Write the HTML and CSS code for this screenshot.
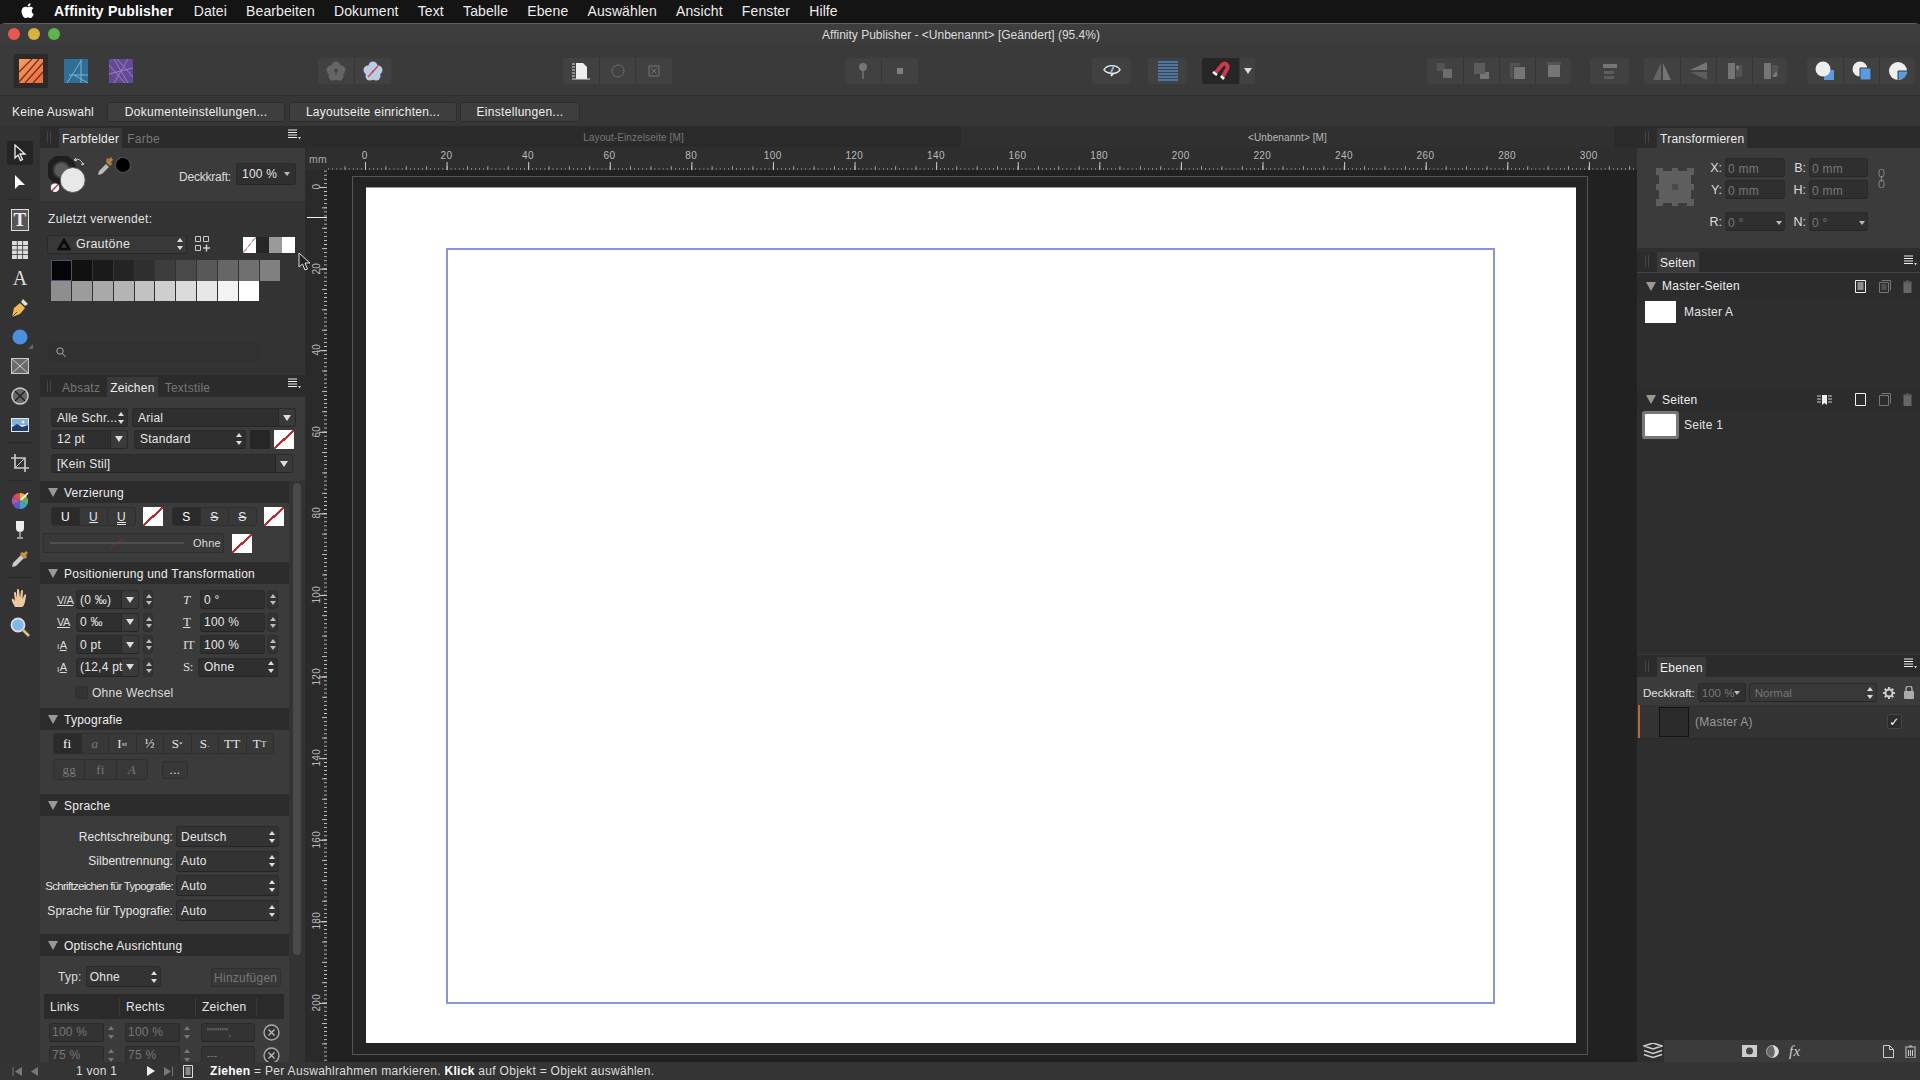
FILE: index.html
```html
<!DOCTYPE html>
<html lang="de">
<head>
<meta charset="utf-8">
<title>Affinity Publisher</title>
<link rel="stylesheet" href="styles.css">
</head>
<body>
<header class="menubar">
  <svg class="apple" width="15" height="17" viewBox="0 0 16 17"><path fill="#fff" d="M12.500 9c0-2 1.600-2.900 1.700-3-1-1.400-2.400-1.600-2.900-1.600-1.200-.1-2.400.7-3 .7s-1.600-.7-2.600-.7C4.400 4.400 3 5.200 2.300 6.500c-1.400 2.400-.4 6 1 8 .7 1 1.500 2 2.500 2 1 0 1.400-.6 2.600-.6s1.500.6 2.600.6 1.800-1 2.500-2c.8-1.100 1.100-2.200 1.100-2.300-.1 0-2.200-.8-2.100-3.200zM10.500 3.200c.5-.7.900-1.600.8-2.500-.8 0-1.700.5-2.300 1.200-.5.600-.9 1.500-.8 2.400.9.100 1.800-.4 2.300-1.100z"/></svg>
  <strong class="app">Affinity Publisher</strong>
  <span>Datei</span><span>Bearbeiten</span><span>Dokument</span><span>Text</span><span>Tabelle</span><span>Ebene</span><span>Auswählen</span><span>Ansicht</span><span>Fenster</span><span>Hilfe</span>
</header>

<div class="window">
  <div class="titlebar">
    <div class="lights"><i class="red"></i><i class="yellow"></i><i class="green"></i></div>
    <div class="title">Affinity Publisher - &lt;Unbenannt&gt; [Geändert] (95.4%)</div>
  </div>

  <div class="toolbar">
    <div class="persona active">
      <svg width="24" height="24" viewBox="0 0 24 24"><defs><linearGradient id="pub" x1="0" y1="0" x2="1" y2="1"><stop offset="0" stop-color="#f0a060"/><stop offset="1" stop-color="#ee6a3c"/></linearGradient></defs><rect width="24" height="24" fill="url(#pub)"/><path d="M0 13 13 0M0 23 20 0M6 24 24 4M14 24 24 13" stroke="#7a2b1c" stroke-width="1.300" fill="none"/></svg>
    </div>
    <div class="persona">
      <svg width="24" height="24" viewBox="0 0 24 24"><rect width="24" height="24" fill="#2f6f97"/><path d="M17 0v24M3 24 17 2M5 16h19M10 16l14 8" stroke="#7fb4d4" stroke-width="1" fill="none"/></svg>
    </div>
    <div class="persona">
      <svg width="24" height="24" viewBox="0 0 24 24"><rect width="24" height="24" fill="#644a94"/><path d="M5 0 19 24M0 15 24 9M19 0 5 24M8 0 24 18M0 6 16 24" stroke="#9a7fc4" stroke-width="1" fill="none"/></svg>
    </div>

    <div class="tb-group at-flower">
      <div class="tb-cell"><svg class="dim" width="20" height="20" viewBox="0 0 20 20"><g fill="#8a8a8a"><circle cx="10" cy="5" r="4.500"/><circle cx="15" cy="9" r="4.500"/><circle cx="13" cy="15" r="4.500"/><circle cx="7" cy="15" r="4.500"/><circle cx="5" cy="9" r="4.500"/></g><path d="M10 14V8M8 10l2-2 2 2" stroke="#444" stroke-width="1.200" fill="none"/></svg></div>
      <div class="tb-cell"><svg width="20" height="20" viewBox="0 0 20 20"><g fill="#bccbe6"><circle cx="10" cy="5" r="4.500"/><circle cx="15" cy="9" r="4.500"/><circle cx="13" cy="15" r="4.500"/><circle cx="7" cy="15" r="4.500"/><circle cx="5" cy="9" r="4.500"/></g><path d="M5 16 15 5" stroke="#d9453c" stroke-width="1.400"/></svg></div>
    </div>
    <div class="tb-group at-doc">
      <div class="tb-cell"><svg width="18" height="18" viewBox="0 0 18 18"><path d="M4 1h7l4 4v12H4z" fill="#eee"/><path d="M0 2h3M0 5h3M0 8h3M0 11h3M0 14h3M0 17h18" stroke="#ddd"/></svg></div>
      <div class="tb-cell"><svg class="dim" width="14" height="14" viewBox="0 0 14 14"><circle cx="7" cy="7" r="6" fill="none" stroke="#999"/></svg></div>
      <div class="tb-cell"><svg class="dim" width="12" height="12" viewBox="0 0 12 12"><path d="M1 1h10v10H1zM3.500 3.500l5 5M8.500 3.500l-5 5" stroke="#aaa" fill="none"/></svg></div>
    </div>
    <div class="tb-group at-pin">
      <div class="tb-cell"><svg class="dim" width="10" height="18" viewBox="0 0 10 18"><circle cx="5" cy="5" r="4" fill="#aaa"/><path d="M5 8v9" stroke="#aaa" stroke-width="1.400"/></svg></div>
      <div class="tb-cell"><svg class="dim" width="6" height="6" viewBox="0 0 6 6"><rect width="6" height="6" fill="#bbb"/></svg></div>
    </div>
    <div class="tb-group at-eye"><div class="tb-cell wide"><svg width="18" height="13" viewBox="0 0 20 14"><path d="M1 6C5 0 15 0 19 6c-2 3-4 4-7 4L9 13l1-3C6 10 3 9 1 6z" fill="none" stroke="#eee" stroke-width="1.500"/><path d="M12 2 9 9" stroke="#8fb5e6" stroke-width="2"/></svg></div></div>
    <div class="tb-group at-lines"><div class="tb-cell wide"><svg width="20" height="22" viewBox="0 0 20 22"><rect width="20" height="22" fill="#2f4660"/><path d="M0 2h20M0 5h20M0 8h20M0 11h20M0 14h20M0 17h20M0 20h20" stroke="#7fa3cc"/></svg></div></div>
    <div class="tb-group at-magnet">
      <div class="tb-cell magnet"><svg width="20" height="20" viewBox="0 0 20 20"><path d="M3.500 13 11 4c3-3 7 0 5 4l-5 9" fill="none" stroke="#c93a4a" stroke-width="4"/><path d="M2 11l4 3M10 15l3 3" stroke="#fff" stroke-width="2.500"/></svg></div>
      <div class="tb-cell caret-cell"><i class="caret"></i></div>
    </div>
    <div class="tb-group at-arrange">
      <div class="tb-cell"><svg class="dim" width="18" height="18" viewBox="0 0 18 18"><path d="M1 1h8v8H1z" fill="#666"/><path d="M7 7h9v9H7z" fill="#999"/></svg></div>
      <div class="tb-cell"><svg class="dim" width="18" height="18" viewBox="0 0 18 18"><path d="M1 1h11v11H1z" fill="#777"/><path d="M12 10h4v7H7v-5h5z" fill="#aaa"/></svg></div>
      <div class="tb-cell"><svg class="dim" width="18" height="18" viewBox="0 0 18 18"><path d="M1 1h10v3H4v12H1z" fill="#666"/><path d="M5 5h11v12H5z" fill="#aaa"/></svg></div>
      <div class="tb-cell"><svg class="dim" width="18" height="18" viewBox="0 0 18 18"><path d="M2 0h14v3H2z" fill="#666"/><path d="M3 3h12v12H3z" fill="#aaa"/></svg></div>
    </div>
    <div class="tb-group at-align"><div class="tb-cell wide"><svg class="dim" width="18" height="18" viewBox="0 0 18 18"><path d="M2 2h14v4H2z" fill="#aaa"/><path d="M3 9h10v3H3zM3 14h10v3H3z" fill="#777"/></svg></div></div>
    <div class="tb-group at-flip">
      <div class="tb-cell"><svg class="dim" width="20" height="20" viewBox="0 0 20 20"><path d="M9 2v17H1z" fill="#888"/><path d="M11 2v17h8z" fill="#aaa"/></svg></div>
      <div class="tb-cell"><svg class="dim" width="20" height="20" viewBox="0 0 20 20"><path d="M18 1v8H1z" fill="#aaa"/><path d="M18 19v-8H1z" fill="#777"/></svg></div>
      <div class="tb-cell"><svg class="dim" width="18" height="18" viewBox="0 0 18 18"><path d="M2 1h7v16H2z" fill="#aaa"/><path d="M10 3h6v12h-6z" fill="#666"/><path d="M12 8V4l-2 2" stroke="#ddd" fill="none"/></svg></div>
      <div class="tb-cell"><svg class="dim" width="18" height="18" viewBox="0 0 18 18"><path d="M2 1h7v16H2z" fill="#aaa"/><path d="M10 3h6v12h-6z" fill="#666"/><path d="M14 10v4h-3l2-2" stroke="#ddd" fill="none"/></svg></div>
    </div>
    <div class="tb-group at-bool">
      <div class="tb-cell"><svg width="20" height="20" viewBox="0 0 20 20"><path d="M9 9h10v10H9z" fill="#5a9be0"/><circle cx="8" cy="8" r="7.500" fill="#eee"/></svg></div>
      <div class="tb-cell"><svg width="20" height="20" viewBox="0 0 20 20"><circle cx="8" cy="8" r="7.500" fill="#eee"/><path d="M8 7h11v12H8z" fill="#5a9be0" stroke="#3a3a3a"/></svg></div>
      <div class="tb-cell"><svg width="20" height="20" viewBox="0 0 20 20"><circle cx="10" cy="10" r="9" fill="#eee"/><path d="M10 10h9a9 9 0 0 1-9 9z" fill="#5a9be0"/><path d="M10 10h9M10 10v9" stroke="#3a3a3a"/></svg></div>
    </div>
  </div>

  <div class="context">
    <span class="ctx-label">Keine Auswahl</span>
    <button class="ctx-btn b1">Dokumenteinstellungen...</button>
    <button class="ctx-btn b2">Layoutseite einrichten...</button>
    <button class="ctx-btn b3">Einstellungen...</button>
  </div>

  <div class="main">
    <nav class="tools">
      <div class="tool selected"><svg width="14" height="18" viewBox="0 0 14 18"><path d="M2 1v13l3-3 2.500 5.500 2-1L7 10h5z" fill="none" stroke="#eee" stroke-width="1.300"/></svg></div>
      <div class="tool"><svg width="12" height="16" viewBox="0 0 12 16"><path d="M1 1v14l4-4h6z" fill="#fff"/></svg></div>
      <div class="tool-sep"></div>
      <div class="tool"><svg width="18" height="22" viewBox="0 0 18 22"><rect x=".5" y=".5" width="17" height="21" fill="#555" stroke="#ddd"/><text x="9" y="17" class="ico-serif">T</text></svg></div>
      <div class="tool"><svg width="16" height="18" viewBox="0 0 16 18"><rect width="16" height="18" fill="#ddd"/><path d="M0 4.500h16M0 9h16M0 13.500h16M5.300 0v18M10.600 0v18" stroke="#333" stroke-width=".8"/></svg></div>
      <div class="tool"><span class="tool-a">A</span></div>
      <div class="tool"><svg width="18" height="20" viewBox="0 0 18 20"><path d="M1 19 3 10l6-5 5 5-5 6z" fill="#f0b955"/><path d="M1 19l5-5" stroke="#6a4a10"/><path d="M10 4l2-3 5 5-3 2z" fill="#e8e0d0"/></svg></div>
      <div class="tool"><svg width="16" height="16" viewBox="0 0 16 16"><circle cx="8" cy="8" r="7.500" fill="#4a8fe0"/></svg><i class="tcorner"></i></div>
      <div class="tool"><svg width="18" height="16" viewBox="0 0 18 16"><rect x=".5" y=".5" width="17" height="15" fill="#6a6a6a" stroke="#ccc"/><path d="M0 0l18 16M18 0 0 16" stroke="#ccc"/></svg></div>
      <div class="tool"><svg width="18" height="18" viewBox="0 0 18 18"><circle cx="9" cy="9" r="8" fill="#666" stroke="#ccc" stroke-width="1.500"/><path d="M4 4l10 10M14 4 4 14" stroke="#222" stroke-width="1.500"/></svg></div>
      <div class="tool"><svg width="18" height="14" viewBox="0 0 18 14"><rect width="18" height="14" fill="#dfe9f4"/><rect x="1" y="1" width="16" height="6" fill="#7fb0e0"/><circle cx="12" cy="4" r="1.500" fill="#ffe9a0"/><path d="M1 9l5-3 5 3 6-2v6H1z" fill="#1e3e70"/></svg></div>
      <div class="tool-sep"></div>
      <div class="tool"><svg width="18" height="18" viewBox="0 0 18 18"><path d="M4 0v14h14M0 4h14v14" fill="none" stroke="#ccc" stroke-width="1.600"/><path d="M4 14 14 4" stroke="#ccc"/></svg></div>
      <div class="tool-sep"></div>
      <div class="tool"><svg width="18" height="18" viewBox="0 0 18 18"><path d="M9 9 9 1A8 8 0 0 1 16 5z" fill="#e8b040"/><path d="M9 9 16 5a8 8 0 0 1 0 8z" fill="#60b060"/><path d="M9 9l7 4a8 8 0 0 1-7 4z" fill="#40a0d0"/><path d="M9 9v8a8 8 0 0 1-7-4z" fill="#5060c0"/><path d="M9 9 2 13a8 8 0 0 1 0-8z" fill="#b050b0"/><path d="M9 9 2 5a8 8 0 0 1 7-4z" fill="#d05050"/><path d="M10 8l7-7" stroke="#fff" stroke-width="1.600"/></svg></div>
      <div class="tool"><svg width="10" height="18" viewBox="0 0 10 18"><path d="M1 0h8v7a4 4 0 0 1-8 0z" fill="#eee"/><path d="M5 10v6M2 17h6" stroke="#bbb" stroke-width="1.400"/></svg></div>
      <div class="tool"><svg width="18" height="18" viewBox="0 0 18 18"><path d="M1 17l1-4 8-8 3 3-8 8z" fill="#ccc"/><path d="M9 4l5 5 2-2-1-2 2-2-2-2-2 2-2-1z" fill="#c89040"/></svg></div>
      <div class="tool-sep"></div>
      <div class="tool"><svg width="18" height="20" viewBox="0 0 18 20"><path d="M4 19C2 15 0 12 1 11s3 2 3 2L3 5c0-1.500 2-1.500 2 0l1 5 0-8c0-1.500 2-1.500 2 0l1 8 1-7c.3-1.500 2-1 2 0l-.6 8 2-4c.6-1.200 2-.6 1.700.6L14 14c-1 3-2 5-3 5z" fill="#eec9a0"/></svg></div>
      <div class="tool"><svg width="20" height="20" viewBox="0 0 20 20"><circle cx="8" cy="8" r="6.500" fill="#7fb8ea" stroke="#ddd" stroke-width="1.800"/><path d="M13 13l6 6" stroke="#e0c080" stroke-width="2.600"/></svg></div>
    </nav>

    <aside class="left">
      <div class="tabs">
        <i class="grip"></i><span class="tab on">Farbfelder</span><span class="tab">Farbe</span>
        <svg class="menu-ico" width="13" height="11" viewBox="0 0 13 11"><path d="M0 1h9M0 3.500h9M0 6h9M0 8.500h9" stroke="#eee"/><path d="M10 8h3l-1.500 2.500z" fill="#ccc"/></svg>
      </div>
      <div class="swatch-top">
        <svg class="colour-ico" width="48" height="42" viewBox="0 0 48 42"><circle cx="13.600" cy="14" r="12" fill="none" stroke="#1e1e1e" stroke-width="6"/><circle cx="13.600" cy="14" r="7" fill="#5a5a5a"/><circle cx="24.700" cy="24" r="12.500" fill="#e8e8e8" stroke="#555"/><circle cx="7" cy="31.700" r="4.800" fill="#fff" stroke="#333"/><path d="M3.800 35 10.200 28.400" stroke="#c03050" stroke-width="1.500"/><path d="M26 4c4-2 8 0 9 5M26 4l2-2M26 4l3 1M35 9l-2-1M35 9l1-2" stroke="#ccc" fill="none"/></svg>
        <svg class="picker-ico" width="17" height="20" viewBox="0 0 17 20"><path d="M1 19l1-4 7-7 3 3-7 7z" fill="#bbb"/><path d="M9 6l4 4 2-2-1-2 2-2-2-3-2 2-2-1z" fill="#b08040"/></svg>
        <i class="picked"></i>
        <span class="lbl opac">Deckkraft:</span>
        <div class="field opac-f">100 %<i class="caret small"></i></div>
      </div>
      <div class="swatch-body">
        <div class="recent">Zuletzt verwendet:</div>
        <div class="palette-row">
          <div class="field pal"><svg width="14" height="13" viewBox="0 0 15 13"><path d="M7.500 2 13 11.500H2z" fill="none" stroke="#0c0c0c" stroke-width="3"/></svg><span>Grautöne</span><i class="ud"></i></div>
          <svg class="pal-ico" width="15" height="16" viewBox="0 0 15 16"><path d="M.5.500h5v5h-5zM8.500.500h5v5h-5zM.5 9.500h5v5h-5z" fill="none" stroke="#ccc"/><path d="M8 12h7M11.500 8.500v7" stroke="#ccc" stroke-width="1.500"/></svg>
          <div class="mini"><i class="none"></i><i class="m2"></i><i class="m3"></i><i class="m4"></i></div>
        </div>
        <div class="swatches">
          <i class="s1"></i><i class="s2"></i><i class="s3"></i><i class="s4"></i><i class="s5"></i><i class="s6"></i><i class="s7"></i><i class="s8"></i><i class="s9"></i><i class="s10"></i><i class="s11"></i>
          <i class="s12"></i><i class="s13"></i><i class="s14"></i><i class="s15"></i><i class="s16"></i><i class="s17"></i><i class="s18"></i><i class="s19"></i><i class="s20"></i><i class="s21"></i>
        </div>
        <div class="search"><svg width="10" height="11" viewBox="0 0 10 11"><circle cx="4" cy="4" r="3.200" fill="none" stroke="#aaa"/><path d="M6.500 6.500 9.500 10" stroke="#aaa"/></svg></div>
      </div>

      <div class="tabs tabs2">
        <i class="grip"></i><span class="tab spaced">Absatz</span><span class="tab on spaced">Zeichen</span><span class="tab">Textstile</span>
        <svg class="menu-ico" width="13" height="11" viewBox="0 0 13 11"><path d="M0 1h9M0 3.500h9M0 6h9M0 8.500h9" stroke="#eee"/><path d="M10 8h3l-1.500 2.500z" fill="#ccc"/></svg>
      </div>
      <div class="char-top">
        <div class="char-row r1">
          <div class="field w77">Alle Schr...<i class="ud"></i></div>
          <div class="field w164 dd">Arial<i class="caret cell"></i></div>
        </div>
        <div class="char-row r2">
          <div class="field w77 dd">12 pt<i class="caret cell"></i></div>
          <div class="field w112">Standard<i class="ud"></i></div>
          <i class="chip dark"></i><i class="chip none"></i>
        </div>
        <div class="char-row">
          <div class="field w242 dd">[Kein Stil]<i class="caret cell"></i></div>
        </div>
      </div>

      <div class="scroller">
        <div class="sections">
          <h3 class="sec-head"><i class="tri"></i>Verzierung</h3>
          <div class="sec verz">
            <div class="verz-row">
              <div class="btn-group w85"><b class="on">U</b><b><u>U</u></b><b><u class="dbl">U</u></b></div>
              <i class="chip none"></i>
              <div class="btn-group w85 ml9"><b class="on">S</b><b><s>S</s></b><b><s>S</s></b></div>
              <i class="chip none"></i>
            </div>
            <div class="line-row">
              <div class="line-box"><svg width="134" height="12" viewBox="0 0 134 12"><path d="M0 6h134" stroke="#666"/><path d="M60 11 74 1" stroke="#8a3030"/></svg><span>Ohne</span></div>
              <i class="chip none"></i>
            </div>
          </div>

          <h3 class="sec-head"><i class="tri"></i>Positionierung und Transformation</h3>
          <div class="sec pos">
            <div class="pos-grid">
              <span class="pi"><u>V/A</u></span><div class="field num dd">(0 ‰)<i class="caret cell"></i></div><i class="stepper st-a"></i>
              <span class="pi it">T</span><div class="field num2">0 °</div><i class="stepper st-b"></i>
              <span class="pi"><u>VA</u></span><div class="field num dd">0 ‰<i class="caret cell"></i></div><i class="stepper st-a"></i>
              <span class="pi serif"><u>T</u></span><div class="field num2">100 %</div><i class="stepper st-b"></i>
              <span class="pi"><small>I</small><u>A</u></span><div class="field num dd">0 pt<i class="caret cell"></i></div><i class="stepper st-a"></i>
              <span class="pi serif">IT</span><div class="field num2">100 %</div><i class="stepper st-b"></i>
              <span class="pi"><small>I</small><u>A</u></span><div class="field num dd">(12,4 pt<i class="caret cell"></i></div><i class="stepper st-a"></i>
              <span class="pi serif">S:</span><div class="field s-sel">Ohne<i class="ud"></i></div>
            </div>
            <div class="check-row"><i class="check"></i>Ohne Wechsel</div>
          </div>

          <h3 class="sec-head"><i class="tri"></i>Typografie</h3>
          <div class="sec typo">
            <div class="btn-group typo1 ser"><b class="on">fi</b><b class="faint it">a</b><b>I<sup>st</sup></b><b>½</b><b>S<sup>*</sup></b><b>S<small>.</small></b><b>TT</b><b>T<small>T</small></b></div>
            <div class="typo2">
              <div class="btn-group typo3 ser"><b class="faint">gg</b><b class="faint">fi</b><b class="faint it">A</b></div>
              <b class="more">...</b>
            </div>
          </div>

          <h3 class="sec-head"><i class="tri"></i>Sprache</h3>
          <div class="sec lang">
            <label>Rechtschreibung:</label><div class="field tall">Deutsch<i class="ud"></i></div>
            <label>Silbentrennung:</label><div class="field tall">Auto<i class="ud"></i></div>
            <label class="squeeze">Schriftzeichen für Typografie:</label><div class="field tall">Auto<i class="ud"></i></div>
            <label>Sprache für Typografie:</label><div class="field tall">Auto<i class="ud"></i></div>
          </div>

          <h3 class="sec-head"><i class="tri"></i>Optische Ausrichtung</h3>
          <div class="sec opt">
            <div class="typ-row"><label>Typ:</label><div class="field tall w75">Ohne<i class="ud"></i></div><b class="add">Hinzufügen</b></div>
            <div class="t-head"><span>Links</span><span>Rechts</span><span>Zeichen</span></div>
            <div class="t-row">
              <div class="field t-f">100 %</div><i class="stepper"></i>
              <div class="field t-f">100 %</div><i class="stepper"></i>
              <div class="field t-c">"""""",</div>
              <svg width="17" height="17" viewBox="0 0 17 17"><circle cx="8.500" cy="8.500" r="7.500" fill="#333" stroke="#aaa" stroke-width="1.400"/><path d="M5.500 5.500l6 6M11.500 5.500l-6 6" stroke="#bbb" stroke-width="1.400"/></svg>
            </div>
            <div class="t-row">
              <div class="field t-f">75 %</div><i class="stepper"></i>
              <div class="field t-f">75 %</div><i class="stepper"></i>
              <div class="field t-c">---</div>
              <svg width="17" height="17" viewBox="0 0 17 17"><circle cx="8.500" cy="8.500" r="7.500" fill="#333" stroke="#aaa" stroke-width="1.400"/><path d="M5.500 5.500l6 6M11.500 5.500l-6 6" stroke="#bbb" stroke-width="1.400"/></svg>
            </div>
          </div>
        </div>
        <div class="scrollbar"></div>
      </div>
    </aside>

    <section class="center">
      <div class="doc-tabs">
        <div class="doc-tab inactive">Layout-Einzelseite [M]</div>
        <div class="doc-tab current">&lt;Unbenannt&gt; [M]</div>
      </div>
      <div class="ruler-top">
        <div class="corner">mm</div>
        <div class="hruler">
          <span>0</span><span>20</span><span>40</span><span>60</span><span>80</span><span>100</span><span>120</span><span>140</span><span>160</span><span>180</span><span>200</span><span>220</span><span>240</span><span>260</span><span>280</span><span>300</span>
        </div>
      </div>
      <div class="doc-area">
        <div class="vruler">
          <span>0</span><span>20</span><span>40</span><span>60</span><span>80</span><span>100</span><span>120</span><span>140</span><span>160</span><span>180</span><span>200</span>
          <i class="marker"></i>
        </div>
        <div class="canvas">
          <div class="bleed">
            <div class="page"><div class="margins"></div></div>
          </div>
        </div>
      </div>
    </section>

    <aside class="right">
      <div class="tabs r-tabs"><i class="grip"></i><span class="tab on">Transformieren</span></div>
      <div class="xform">
        <svg class="xf-ico" width="38" height="38" viewBox="0 0 38 38"><rect x="3" y="3" width="32" height="32" rx="1" fill="#5e5e5e"/><g fill="#5e5e5e"><rect width="7" height="7"/><rect x="31" width="7" height="7"/><rect y="31" width="7" height="7"/><rect x="31" y="31" width="7" height="7"/><rect x="16" width="6" height="5"/><rect x="16" y="33" width="6" height="5"/><rect y="16" width="5" height="6"/><rect x="33" y="16" width="5" height="6"/></g><rect x="16" y="16" width="6" height="6" fill="#4a4a4a"/></svg>
        <div class="xf-grid">
          <label>X:</label><div class="field dimf">0 mm</div><label>B:</label><div class="field dimf">0 mm</div>
          <svg class="chain" width="7" height="19" viewBox="0 0 7 19"><path d="M1 2.500a2.500 2.500 0 0 1 5 0v3a2.500 2.500 0 0 1-5 0zM1 13.500a2.500 2.500 0 0 1 5 0v3a2.500 2.500 0 0 1-5 0zM3.500 7v6" fill="none" stroke="#888"/></svg>
          <label>Y:</label><div class="field dimf">0 mm</div><label>H:</label><div class="field dimf">0 mm</div>
          <label class="r3">R:</label><div class="field dimf r3">0 °<i class="caret small"></i></div><label class="r3">N:</label><div class="field dimf r3">0 °<i class="caret small"></i></div>
        </div>
      </div>
      <div class="tabs r-tabs seiten-tabs"><i class="grip"></i><span class="tab on">Seiten</span>
        <svg class="menu-ico" width="13" height="11" viewBox="0 0 13 11"><path d="M0 1h9M0 3.500h9M0 6h9M0 8.500h9" stroke="#eee"/><path d="M10 8h3l-1.500 2.500z" fill="#ccc"/></svg>
      </div>
      <div class="pages">
        <div class="p-head"><i class="tri"></i><span>Master-Seiten</span>
          <svg class="p1" width="11" height="13" viewBox="0 0 11 13"><path d="M.5.500h10v12H.5zM2.500 3h6M2.500 5h6M2.500 7h6M2.500 9h6" fill="none" stroke="#eee"/></svg>
          <svg class="p2" width="12" height="13" viewBox="0 0 12 13"><path d="M.5 2.500h9v10h-9zM2.500.5h9v10M2.500 5h5M2.500 7h5M2.500 9h5" fill="none" stroke="#777"/></svg>
          <svg class="p3" width="9" height="13" viewBox="0 0 9 13"><path d="M1 3h7v10H1zM0 2h9M3 1h3" fill="#666" stroke="#666"/></svg>
        </div>
        <div class="p-item"><i class="thumb"></i>Master A</div>
        <div class="p-head second"><i class="tri"></i><span>Seiten</span>
          <svg class="pb" width="15" height="10" viewBox="0 0 15 10"><path d="M0 1h4M0 4h4M0 7h4M11 1h4M11 4h4M11 7h4" stroke="#ccc"/><path d="M5 0h5v10l-2.500-2L5 10z" fill="#eee"/></svg>
          <svg class="p1" width="11" height="13" viewBox="0 0 11 13"><path d="M.5.500h10v12H.5z" fill="none" stroke="#eee"/></svg>
          <svg class="p2" width="12" height="13" viewBox="0 0 12 13"><path d="M.5 2.500h9v10h-9zM2.500.5h9v10" fill="none" stroke="#777"/></svg>
          <svg class="p3" width="9" height="13" viewBox="0 0 9 13"><path d="M1 3h7v10H1zM0 2h9M3 1h3" fill="#666" stroke="#666"/></svg>
        </div>
        <div class="p-item"><i class="thumb ring"></i>Seite 1</div>
      </div>
      <div class="tabs r-tabs ebenen-tabs"><i class="grip"></i><span class="tab on">Ebenen</span>
        <svg class="menu-ico" width="13" height="11" viewBox="0 0 13 11"><path d="M0 1h9M0 3.500h9M0 6h9M0 8.500h9" stroke="#eee"/><path d="M10 8h3l-1.500 2.500z" fill="#ccc"/></svg>
      </div>
      <div class="layer-opts">
        <span>Deckkraft:</span>
        <div class="field lo-a">100 %<i class="caret small"></i></div>
        <div class="field lo-b">Normal<i class="ud"></i></div>
        <svg width="12" height="12" viewBox="0 0 12 12"><circle cx="6" cy="6" r="3.500" fill="none" stroke="#ccc" stroke-width="2"/><path d="M6 0v2M6 10v2M0 6h2M10 6h2M1.800 1.800l1.400 1.400M8.800 8.800l1.400 1.400M1.800 10.200l1.400-1.400M8.800 3.200l1.400-1.400" stroke="#ccc" stroke-width="2"/></svg>
        <svg width="10" height="13" viewBox="0 0 10 13"><rect y="5" width="10" height="8" rx="1" fill="#aaa"/><path d="M2 5V3a3 3 0 0 1 6 0v2" fill="none" stroke="#aaa" stroke-width="1.400"/></svg>
      </div>
      <div class="layers">
        <div class="layer"><i class="strip"></i><i class="l-thumb"></i><span>(Master A)</span><i class="l-check">✓</i></div>
      </div>
      <div class="layer-foot">
        <div class="stack"><svg width="20" height="16" viewBox="0 0 20 16"><path d="M1 3l9-3 9 3-9 3zM1 7.500l9 3 9-3M1 11.500l9 3 9-3" fill="none" stroke="#ccc" stroke-width="1.600"/></svg></div>
        <svg class="f1" width="15" height="12" viewBox="0 0 15 12"><rect width="15" height="12" fill="#ccc"/><circle cx="7.500" cy="6" r="3.500" fill="#444"/></svg>
        <svg class="f2" width="13" height="13" viewBox="0 0 13 13"><circle cx="6.500" cy="6.500" r="6" fill="#666" stroke="#aaa"/><path d="M6.500.5a6 6 0 0 1 0 12c3-3 3-8 0-12z" fill="#ddd"/></svg>
        <em class="fx">fx</em>
        <svg class="f3" width="11" height="13" viewBox="0 0 11 13"><path d="M.5.500h6l4 4v8H.5zM6.500.5v4h4" fill="none" stroke="#ccc"/></svg>
        <svg class="f4" width="11" height="13" viewBox="0 0 11 13"><path d="M1 3v10h9V3M0 2h11M4 1h3M3.500 5v6M5.500 5v6M7.500 5v6" fill="none" stroke="#ccc"/></svg>
      </div>
    </aside>
  </div>

  <footer class="status">
    <svg class="n1" width="10" height="9" viewBox="0 0 10 9"><path d="M1 0v9" stroke="#777"/><path d="M10 0v9L3 4.500z" fill="#777"/></svg>
    <svg class="n2" width="7" height="9" viewBox="0 0 7 9"><path d="M7 0v9L0 4.500z" fill="#777"/></svg>
    <span class="pg">1 von 1</span>
    <svg class="n3" width="8" height="10" viewBox="0 0 8 10"><path d="M0 0v10l8-5z" fill="#eee"/></svg>
    <svg class="n4" width="9" height="9" viewBox="0 0 9 9"><path d="M0 0v9l7-4.500z" fill="#777"/><path d="M8.500 0v9" stroke="#777"/></svg>
    <svg class="n5" width="10" height="13" viewBox="0 0 10 13"><path d="M.5.500h9v12h-9zM2.500 3h5M2.500 5h5M2.500 7h5M2.500 9h5" fill="none" stroke="#ddd"/></svg>
    <span class="hint"><b>Ziehen</b> = Per Auswahlrahmen markieren. <b>Klick</b> auf Objekt = Objekt auswählen.</span>
  </footer>
</div>

<svg class="mouse" width="14" height="19" viewBox="0 0 14 19"><path d="M1 1v14l3.500-3 2.500 6 2.500-1-2.500-6H12z" fill="#222" stroke="#ddd" stroke-width="1"/></svg>
</body>
</html>
```
FILE: styles.css
```css
* { box-sizing: border-box; }
html, body { margin: 0; padding: 0; }
body {
  width: 1920px; height: 1080px; overflow: hidden; position: relative;
  display: flex; flex-direction: column;
  background: #141414; color: #ddd;
  font: 12px "Liberation Sans", Arial, sans-serif;
  letter-spacing: .25px;
}
i { display: block; font-style: normal; }
svg { display: block; flex: none; }

/* shared controls */
.field {
  height: 19px; display: flex; align-items: center; padding: 0 5px; flex: none;
  background: #2f2f2f; border: 1px solid #2a2a2a; border-bottom-color: #252525; border-radius: 3px; color: #e6e6e6; overflow: hidden; white-space: nowrap;
}
.dd { padding-right: 3px; background: linear-gradient(90deg, #2f2f2f calc(100% - 17px), #262626 calc(100% - 17px) calc(100% - 16px), #3a3a3a calc(100% - 16px)); }
.caret { width: 0; height: 0; border: 4px solid transparent; border-top: 6px solid #ddd; border-bottom: 0; flex: none; }
.caret.small { border-width: 4px 3px 0; border-top-color: #bbb; margin-left: auto; }
.caret.cell { margin-left: auto; margin-right: 1.500px; }
.ud { width: 6px; height: 12px; margin-left: auto; margin-right: -2px; flex: none; display: flex; flex-direction: column; justify-content: space-between; }
.ud::before, .ud::after { content: ""; border: 3px solid transparent; width: 0; }
.ud::before { border-top: 0; border-bottom: 4px solid #ddd; }
.ud::after { border-bottom: 0; border-top: 4px solid #ddd; }
.chip { width: 20px; height: 19px; flex: none; }
.chip.dark { background: #262626; border-radius: 2px; }
.chip.none { background: linear-gradient(to bottom right, #fff 46%, #b3302f 46% 54%, #fff 54%); }
.tall { height: 21px; }
.w77 { width: 77px; }
.w164 { width: 164px; }
.w112 { width: 112px; margin-left: 2px; }
.w242 { width: 242px; }
.w75 { width: 75px; }
.w85 { width: 85px; }
.tri { width: 0; height: 0; border: 5.500px solid transparent; border-top: 9px solid #999; border-bottom: 0; margin-right: 6px; flex: none; }

/* menu bar */
.menubar {
  height: 23px; flex: none; background: #141414; color: #eee;
  display: flex; align-items: center; font-size: 14px; letter-spacing: .1px;
  padding: 0 0 1px 20px;
}
.menubar .apple { margin-right: 19px; margin-top: -2px; }
.menubar span { margin-left: 19.200px; }
.menubar .app { letter-spacing: .2px; color: #fff; margin-right: 1px; }

/* window */
.window {
  flex: 1; min-height: 0; display: flex; flex-direction: column;
  background: #383838; border-top: 1px solid #5e5e5e; border-radius: 5px 5px 0 0;
}
.titlebar { height: 22px; flex: none; position: relative; display: flex; align-items: center; justify-content: center; background: linear-gradient(#3e3e3e, #3b3b3b); }
.title { font-size: 12px; color: #ddd; letter-spacing: 0; padding-left: 2px; }
.lights { position: absolute; left: 8px; top: 4px; display: flex; gap: 8px; }
.lights i { width: 12px; height: 12px; border-radius: 50%; }
.red { background: #e9574f; }
.yellow { background: #d8b240; }
.green { background: #5cb54c; }

.toolbar {
  height: 50px; flex: none; display: flex; align-items: center; padding-left: 14px;
  background: #3a3a3a; border-bottom: 1px solid #2e2e2e;
}
.persona { width: 34px; height: 34px; flex: none; margin-right: 11px; display: flex; align-items: center; justify-content: center; border-radius: 2px; }
.persona.active { background: #2a2a2a; }
.tb-group { display: flex; height: 26px; border-radius: 3px; background: #414141; flex: none; }
.tb-cell { width: 36px; flex: none; display: flex; align-items: center; justify-content: center; border-left: 1px solid #363636; }
.tb-cell:first-child { border-left: 0; }
.tb-cell.wide { width: 39px; }
.tb-cell.magnet { width: 37px; background: #262626; border-radius: 3px 0 0 3px; }
.tb-cell.caret-cell { width: 16px; }
.dim { opacity: .5; }
.at-flower { margin-left: 169px; width: 73px; }
.at-doc { margin-left: 172px; width: 109px; }
.at-pin { margin-left: 173px; width: 73px; }
.at-eye { margin-left: 174px; }
.at-lines { margin-left: 17px; }
.at-magnet { margin-left: 15px; }
.at-arrange { margin-left: 172px; width: 144px; }
.at-align { margin-left: 19px; }
.at-flip { margin-left: 15px; width: 143px; }
.at-bool { margin-left: 20px; width: 108px; }

.context { height: 30px; flex: none; display: flex; align-items: center; padding: 2px 0 0 12px; background: #363636; }
.ctx-label { width: 95px; color: #eee; }
.ctx-btn {
  height: 20px; padding: 0; border: 1px solid #2c2c2c; border-radius: 2px; background: #3e3e3e;
  color: #eee; font: inherit; letter-spacing: .3px;
}
.b1 { width: 178px; }
.b2 { width: 168px; margin-left: 4px; }
.b3 { width: 120px; margin-left: 3px; }

/* layout */
.main { flex: 1; min-height: 0; display: flex; }
.tools { width: 40px; flex: none; background: #333; padding-top: 15px; display: flex; flex-direction: column; align-items: center; }
.tool { width: 26px; height: 24px; flex: none; margin-bottom: 5.200px; display: flex; align-items: center; justify-content: center; position: relative; }
.tool.selected { background: #252525; border-radius: 3px; }
.tool-sep { width: 26px; height: 1px; flex: none; background: #282828; margin-bottom: 8px; }
.tool-a { font: 20px "Liberation Serif", serif; color: #ddd; }
.ico-serif { font: bold 19px "Liberation Serif", serif; text-anchor: middle; fill: #eee; }
.tcorner { width: 0; height: 0; border-left: 5px solid transparent; border-bottom: 5px solid #666; position: absolute; right: 0; bottom: 0; }

.left { width: 265px; flex: none; background: #333; display: flex; flex-direction: column; }
.tabs { height: 22px; flex: none; background: #2b2b2b; display: flex; align-items: flex-end; padding-left: 7px; position: relative; }
.grip { width: 4px; height: 12px; border-left: 1px solid #444; border-right: 1px solid #444; margin: 0 8px 5px 0; }
.tab { height: 20px; padding: 2px 3px 0; display: flex; align-items: center; color: #777; margin-right: 2px; }
.tab.on { background: #3a3a3a; color: #eee; }
.tab.spaced { margin-right: 4px; }
.menu-ico { position: absolute; right: 4px; top: 3px; }

.swatch-top { height: 53px; flex: none; background: #3b3b3b; display: flex; align-items: flex-start; padding: 8px 9px 0 8px; }
.picker-ico { margin: 0 0 0 1px; }
.picked { width: 16px; height: 16px; border-radius: 50%; background: #000; border: 1px solid #555; margin: 1px 0 0 1px; }
.opac { margin: 14px 0 0 48px; letter-spacing: -.2px; }
.opac-f { width: 60px; height: 22px; margin: 7px 0 0 5px; }

.swatch-body { height: 174px; flex: none; display: flex; flex-direction: column; padding: 11px 0 0 8px; }
.recent { color: #e4e4e4; height: 14px; line-height: 14px; letter-spacing: .35px; }
.palette-row { display: flex; align-items: center; margin: 8px 0 0 -1px; height: 20px; }
.pal { width: 140px; background: #383838; gap: 5px; padding-left: 9px; }
.pal span { font-size: 12.500px; }
.pal-ico { margin-left: 8px; }
.mini { display: flex; margin-left: 33px; margin-top: 2px; }
.mini i { width: 13px; height: 16px; }
.mini .none { background: linear-gradient(to bottom right, #fff 47%, #c99 47% 53%, #fff 53%); }
.m2 { background: #262626; }
.m3 { background: #9a9a9a; }
.m4 { background: #fff; }

.swatches { display: grid; grid-template-columns: repeat(11, 20.900px); grid-auto-rows: 20.500px; margin: 6px 0 0 3px; }
.swatches i { border-right: 1px solid #333; }
.s1 { background: #050508; border: 1px solid #4a5570 !important; }
.s2 { background: #111; } .s3 { background: #1a1a1a; } .s4 { background: #242424; } .s5 { background: #2f2f2f; }
.s6 { background: #3d3d3d; } .s7 { background: #4a4a4a; } .s8 { background: #585858; } .s9 { background: #666; }
.s10 { background: #707070; } .s11 { background: #808080; } .s12 { background: #8e8e8e; } .s13 { background: #9c9c9c; }
.s14 { background: #a9a9a9; } .s15 { background: #b4b4b4; } .s16 { background: #c2c2c2; } .s17 { background: #cecece; }
.s18 { background: #dbdbdb; } .s19 { background: #e7e7e7; } .s20 { background: #f3f3f3; } .s21 { background: #fff; }
.search { width: 211px; height: 18px; margin: 42px 0 0 0; border: 1px solid #2f2f2f; background: #313131; border-radius: 2px; padding: 3px 0 0 7px; }

.char-top { height: 84px; flex: none; background: #3b3b3b; padding: 11px 0 0 11px; }
.char-row { display: flex; gap: 4px; align-items: center; height: 19.500px; }
.char-row.r1 { margin-bottom: 2px; }
.char-row.r2 { margin-bottom: 5px; }

.scroller { flex: 1; min-height: 0; overflow: hidden; display: flex; }
.sections { width: 249px; flex: none; }
.scrollbar { width: 8px; height: 472px; margin: 2px 0 0 4px; background: #4a4a4a; border-radius: 4px; flex: none; }
.sec-head { height: 22px; margin: 0; display: flex; align-items: center; font: inherit; color: #eee; background: #2c2c2c; padding: 1px 0 0 8px; }
.sec { background: #3b3b3b; }

.verz { height: 59px; padding: 4px 0 0 11px; }
.verz-row { display: flex; align-items: center; gap: 7px; }
.btn-group { display: flex; height: 19px; border-radius: 3px; background: #383838; border: 1px solid #2e2e2e; overflow: hidden; flex: none; }
.btn-group b { flex: 1; display: flex; align-items: center; justify-content: center; font-weight: normal; border-left: 1px solid #2e2e2e; color: #e6e6e6; }
.btn-group b:first-child { border-left: 0; }
.btn-group b.on { background: #2a2a2a; color: #fff; }
.ml9 { margin-left: 2px; }
.dbl { text-decoration-style: double; }
.line-row { display: flex; gap: 8px; margin: 7px 0 0 -8px; align-items: center; }
.line-box { width: 181px; height: 20px; display: flex; align-items: center; padding-left: 6px; gap: 9px; border: 1px solid #2e2e2e; border-radius: 2px; background: #383838; font-size: 11px; }

.pos { height: 124px; padding-top: 6px; }
.pos-grid { display: grid; grid-template-columns: 19px 63px 44px 17px 65px 13px; grid-auto-rows: 19px; row-gap: 3.500px; padding-left: 17px; }
.pi { font-size: 11px; color: #ddd; display: flex; align-items: center; white-space: nowrap; letter-spacing: -.5px; }
.pi small { font-size: 8px; margin: 4px 1px 0 0; }
.num { width: 63px; padding-left: 3px; }
.num2 { width: 65px; padding-left: 3px; }
.st-a { width: 10px; margin-left: 4px; }
.st-b { width: 11px; margin-left: 2px; }
.it { font-style: italic; font-family: "Liberation Serif", serif; font-size: 13px; }
.serif { font-family: "Liberation Serif", serif; font-size: 13px; }
.s-sel { grid-column: 5 / span 2; margin-left: -2px; width: 80px; }
.stepper { height: 19px; border: 1px solid #2e2e2e; border-radius: 3px; background: #333; position: relative; display: block; }
.stepper::before, .stepper::after { content: ""; position: absolute; left: 1.500px; width: 0; height: 0; border: 3px solid transparent; }
.stepper::before { top: 3px; border-top: 0; border-bottom: 4px solid #bbb; }
.stepper::after { bottom: 3px; border-bottom: 0; border-top: 4px solid #bbb; }
.check-row { display: flex; align-items: center; gap: 4px; margin: 6px 0 0 35px; color: #ddd; height: 20px; }
.check { width: 13px; height: 13px; border-radius: 3px; background: #333; border: 1px solid #2e2e2e; }

.typo { height: 64px; padding: 3px 0 0 13px; }
.ser b { font-family: "Liberation Serif", serif; font-size: 13px; }
.typo1 { width: 221px; height: 21px; }
.btn-group sup { font-size: 7px; line-height: 0; }
.btn-group small { font-size: 9px; }
.btn-group .faint { color: #7a7a7a; }
.typo2 { display: flex; align-items: center; margin-top: 5px; }
.typo3 { width: 95px; height: 21px; }
.more { width: 26px; height: 18px; margin-left: 14px; display: flex; align-items: center; justify-content: center; font-weight: normal; background: #383838; border: 1px solid #2e2e2e; border-radius: 3px; }

.lang { height: 118px; display: grid; grid-template-columns: 133px 103px; column-gap: 3px; grid-auto-rows: 21px; row-gap: 3.700px; padding-top: 10px; align-items: center; }
.lang label { text-align: right; white-space: nowrap; color: #e4e4e4; letter-spacing: .05px; }
.lang .squeeze { font-size: 11.500px; letter-spacing: -.7px; }
.lang .field { width: 103px; background: #333; padding-left: 4px; }

.opt { height: 110px; padding-top: 10px; overflow: hidden; }
.typ-row { display: flex; align-items: center; padding-left: 18px; gap: 4px; }
.typ-row .field { background: #333; padding-left: 3px; }
.add { margin-left: 46px; width: 70px; height: 19px; margin-top: 2px; display: flex; align-items: center; justify-content: center; font-weight: normal; color: #777; background: #383838; border: 1px solid #2e2e2e; border-radius: 3px; white-space: nowrap; letter-spacing: .25px; }
.t-head { margin: 7px 0 0 4px; width: 240px; height: 25px; padding-top: 1px; background: #2a2a2a; display: grid; grid-template-columns: 76px 76px 61px; align-items: center; color: #e6e6e6; }
.t-head span { padding-left: 6px; height: 19px; line-height: 19px; border-right: 1px solid #3a3a3a; }
.t-row { display: flex; align-items: center; margin: 3px 0 0 9px; height: 20px; }
.t-row .stepper { width: 9px; height: 19px; margin: 0 9px 0 3px; background: none; border: 0; }
.t-row .stepper::before, .t-row .stepper::after { left: 1px; border-bottom-color: #777; border-top-color: #777; }
.t-f { width: 55px; color: #777; background: #333; padding-left: 2px; }
.t-c { width: 54px; color: #777; background: #333; margin-right: 8px; font-size: 10px; letter-spacing: 0; }

/* centre */
.center { flex: 1; min-width: 0; display: flex; flex-direction: column; background: #212121; border-left: 1px solid #2b2b2b; }
.doc-tabs { height: 21px; flex: none; display: flex; background: #2a2a2a; font-size: 10px; letter-spacing: .1px; }
.doc-tab { display: flex; align-items: center; justify-content: center; padding-top: 1px; }
.doc-tab.inactive { width: 655px; background: #2a2a2a; color: #777; }
.doc-tab.current { width: 653px; background: #303030; color: #bbb; }
.ruler-top { height: 23px; flex: none; display: flex; background: #2e2e2e; }
.corner { width: 21px; height: 23px; flex: none; padding: 6px 0 0 3px; font-size: 10.500px; color: #aaa; }
.hruler {
  flex: 1; min-width: 0; overflow: hidden; display: flex; color: #bbb; font-size: 10px;
  background-image: linear-gradient(90deg, #ccc 1px, transparent 1px), linear-gradient(90deg, #999 1px, transparent 1px), linear-gradient(90deg, #888 1px, transparent 1px);
  background-size: 81.600px 8px, 20.400px 4px, 4.080px 2px;
  background-position: 38px 100%, 38px 100%, 38px 100%;
  background-repeat: repeat-x;
}
.hruler span { width: 81.600px; flex: none; text-align: center; padding-top: 3px; line-height: 11px; letter-spacing: .4px; }
.hruler span:first-child { margin-left: -3px; }

.doc-area { flex: 1; min-height: 0; display: flex; }
.vruler {
  width: 21px; flex: none; overflow: hidden; position: relative; background-color: #2a2a2a; color: #bbb; font-size: 10px;
  display: flex; flex-direction: column;
  background-image: linear-gradient(#ccc 1px, transparent 1px), linear-gradient(#bbb 1px, transparent 1px), linear-gradient(#ccc 1px, transparent 1px);
  background-size: 8px 81.600px, 5px 20.400px, 3px 4.080px;
  background-position: 100% 17px, 100% 17px, 100% 17px;
  background-repeat: repeat-y;
}
.vruler span { height: 81.600px; flex: none; writing-mode: vertical-rl; transform: rotate(180deg); text-align: center; width: 21px; line-height: 21px; letter-spacing: .4px; padding-left: 8px; }
.vruler span:first-child { margin-top: -24px; }
.marker { position: absolute; left: 1px; top: 47px; width: 20px; height: 1px; background: #eee; }
.canvas { flex: 1; min-width: 0; padding: 6px 0 0 25px; }
.bleed { width: 1236px; height: 879px; border: 1px solid #555; padding: 10px 11px 11px 13px; background: #242424; }
.page { width: 1210px; height: 856px; background: #fff; padding: 60px 81px 39px 80px; border-top: 1px solid #999; }
.margins { width: 100%; height: 100%; border: 2px solid #8c94d4; }

/* right */
.right { width: 283px; flex: none; background: #2e2e2e; display: flex; flex-direction: column; }
.r-tabs { height: 22px; padding-left: 8px; }
.r-tabs .menu-ico { right: 3px; }
.xform { height: 100px; flex: none; background: #3b3b3b; display: flex; padding: 10px 0 0 19px; }
.xf-ico { margin-top: 10px; }
.xf-grid { display: grid; grid-template-columns: 19px 60px 24px 59px 20px; grid-template-rows: 19px 19px 7px 19px; row-gap: 3px; margin-left: 12px; align-items: center; align-content: start; }
.xf-grid label { text-align: right; padding-right: 3px; color: #ddd; font-size: 12.500px; letter-spacing: 0; }
.dimf { color: #777; width: 100%; padding: 2px 2px 0; }
.chain { grid-row: 1 / span 2; grid-column: 5; margin: 0 0 0 10px; }
.r3 { grid-row: 4; }
.seiten-tabs { margin-top: 4px; height: 21px; border-bottom: 1px solid #444; }
.pages { height: 381px; flex: none; }
.p-head { height: 25px; display: flex; align-items: center; padding: 1px 0 0 9px; color: #eee; background: #2c2c2c; }
.p-head span { flex: 1; }
.p1 { margin-right: 13px; }
.p2 { margin-right: 12px; }
.p3 { margin-right: 8px; }
.pb { margin-right: 23px; }
.p-head.second { margin-top: 61px; height: 24px; }
.p-item { height: 28px; display: flex; align-items: center; padding-left: 8px; gap: 8px; color: #e4e4e4; }
.thumb { width: 31px; height: 22px; background: #fff; }
.thumb.ring { box-shadow: 0 0 0 3px #777; border-radius: 1px; }
.ebenen-tabs { height: 23px; border-top: 1px solid #3a3a3a; }
.layer-opts { height: 28px; flex: none; background: #3b3b3b; display: flex; align-items: center; padding: 3px 0 0 6px; color: #e4e4e4; font-size: 11.500px; letter-spacing: 0; }
.lo-a { width: 48px; margin-left: 3px; padding-left: 3px; color: #777; background: #303030; }
.lo-b { width: 128px; margin: 0 4px 0 3px; color: #777; background: #383838; }
.layer-opts svg:last-child { margin-left: 9px; }
.layer-opts svg:nth-last-child(2) { margin-left: 2px; }
.layers { flex: 1; min-height: 0; }
.layer { height: 34px; background: #333; display: flex; align-items: center; color: #999; border-bottom: 1px solid #2a2a2a; }
.strip { width: 2px; height: 33px; background: #b8663a; margin-left: 1px; }
.l-thumb { width: 30px; height: 30px; margin-left: 19px; background: #2a2a2a; border: 1px solid #111; }
.layer span { margin-left: 6px; }
.l-check { margin-left: 134px; width: 15px; height: 15px; background: #2c2c2c; border: 1px solid #444; border-radius: 2px; color: #fff; display: flex; align-items: center; justify-content: center; font: 12px "DejaVu Sans", sans-serif; }
.layer-foot { height: 22px; flex: none; background: #3b3b3b; margin-left: 5px; display: flex; align-items: center; }
.stack { width: 22px; height: 22px; background: #2e2e2e; display: flex; align-items: center; justify-content: center; }
.f1 { margin-left: 78px; }
.f2 { margin-left: 9px; }
.fx { font: italic 15px "Liberation Serif", serif; margin-left: 10px; color: #ccc; }
.f3 { margin-left: 83px; }
.f4 { margin-left: 11px; }

/* status */
.status { height: 18px; flex: none; background: #343434; display: flex; align-items: center; padding-left: 12px; color: #ddd; }
.n2 { margin-left: 9px; }
.pg { width: 39px; margin-left: 38px; white-space: nowrap; }
.n3 { margin-left: 32px; }
.n4 { margin-left: 9px; }
.n5 { margin-left: 10px; }
.hint { margin-left: 17px; white-space: nowrap; letter-spacing: .3px; }
.hint b { color: #fff; }

.mouse { position: absolute; left: 298px; top: 252px; }
```
